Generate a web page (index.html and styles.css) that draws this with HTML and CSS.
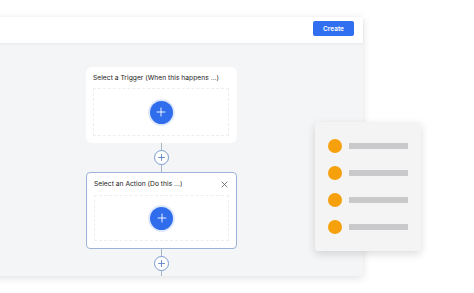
FILE: index.html
```html
<!DOCTYPE html>
<html lang="en">
<head>
    <meta charset="UTF-8">
    <meta name="viewport" content="width=device-width, initial-scale=1.0">
    <title>Workflow Builder</title>
    <link rel="stylesheet" href="styles.css">
</head>
<body>
    <div class="window">
        <div class="window-header">
            <button class="create-btn">Create</button>
        </div>
        <div class="window-body">
            <div class="flow">
                <div class="card">
                    <div class="card-title">Select a Trigger (When this happens ...)</div>
                    <div class="drop-zone">
                        <span class="add-big">
                            <svg viewBox="0 0 24 24" width="12" height="12"><path d="M12 4v16M4 12h16" stroke="#fff" stroke-width="1.8" fill="none" stroke-linecap="round"/></svg>
                        </span>
                    </div>
                </div>

                <div class="connector">
                    <span class="add-small">
                        <svg viewBox="0 0 16 16" width="9" height="9"><path d="M8 2v12M2 8h12" stroke="#5b82c9" stroke-width="1.6" fill="none"/></svg>
                    </span>
                </div>

                <div class="card card-active">
                    <div class="card-title">
                        Select an Action (Do this ...)
                        <svg class="close" viewBox="0 0 10 10" width="7" height="7"><path d="M1 1l8 8M9 1l-8 8" stroke="#555" stroke-width="1.1" fill="none"/></svg>
                    </div>
                    <div class="drop-zone drop-zone-short">
                        <span class="add-big">
                            <svg viewBox="0 0 24 24" width="12" height="12"><path d="M12 4v16M4 12h16" stroke="#fff" stroke-width="1.8" fill="none" stroke-linecap="round"/></svg>
                        </span>
                    </div>
                </div>

                <div class="connector connector-end">
                    <span class="add-small">
                        <svg viewBox="0 0 16 16" width="9" height="9"><path d="M8 2v12M2 8h12" stroke="#5b82c9" stroke-width="1.6" fill="none"/></svg>
                    </span>
                </div>
            </div>
        </div>
    </div>

    <!-- Floating list panel -->
    <div class="list-panel">
        <div class="list-row"><span class="dot"></span><span class="bar"></span></div>
        <div class="list-row"><span class="dot"></span><span class="bar"></span></div>
        <div class="list-row"><span class="dot"></span><span class="bar"></span></div>
        <div class="list-row"><span class="dot"></span><span class="bar"></span></div>
    </div>
</body>
</html>
```

FILE: styles.css
```css
* {
    margin: 0;
    padding: 0;
    box-sizing: border-box;
}

html, body {
    width: 100%;
    height: 100%;
    overflow: hidden;
}

body {
    background-color: #ffffff;
    font-family: 'Inter', 'Helvetica', sans-serif;
    color: #333;
    padding-top: 17px;
}

.window {
    width: 383px;
    margin-left: -20px;
    background-color: #f4f5f7;
    box-shadow: 0 2px 8px rgba(0, 0, 0, 0.12);
}

.window-header {
    height: 26px;
    background-color: #ffffff;
    display: flex;
    justify-content: flex-end;
    align-items: flex-start;
    padding: 4px 9px 0 0;
    box-shadow: 0 1px 3px rgba(0, 0, 0, 0.06);
    position: relative;
}

.create-btn {
    background-color: #2f6ff0;
    color: #fff;
    border: none;
    border-radius: 2px;
    width: 41px;
    height: 15px;
    font-family: 'Inter', sans-serif;
    font-size: 6.5px;
    font-weight: 600;
}

.window-body {
    height: 233px;
    padding: 24px 0 0 106px;
    overflow: hidden;
}

.flow {
    width: 151px;
    display: flex;
    flex-direction: column;
    align-items: stretch;
}

.card {
    background-color: #ffffff;
    border-radius: 6px;
    padding: 0 8px 7px 7px;
    height: 76px;
}

.card-active {
    border: 1px solid #9db2d6;
    border-radius: 4px;
    height: 77px;
    padding: 0 7px 7px 7px;
}

.card-title {
    height: 21px;
    display: flex;
    align-items: center;
    justify-content: space-between;
    font-size: 6.7px;
    color: #222;
    letter-spacing: 0.02px;
}

.card-active .card-title {
    height: 22px;
    padding-right: 1px;
}

.drop-zone {
    height: 48px;
    border: 1px dashed #eceef1;
    display: flex;
    justify-content: center;
    align-items: center;
}

.drop-zone-short {
    height: 46px;
}

.add-big {
    width: 23px;
    height: 23px;
    border-radius: 50%;
    background-color: #2f6ded;
    box-shadow: 0 0 0 2px rgba(47, 109, 237, 0.15);
    display: flex;
    justify-content: center;
    align-items: center;
}

.connector {
    height: 29px;
    display: flex;
    justify-content: center;
    align-items: center;
    background: linear-gradient(#a8b4c8, #a8b4c8) no-repeat center / 1px 100%;
}

.connector-end {
    height: 30px;
    align-items: flex-start;
    padding-top: 7px;
}

.add-small {
    width: 15px;
    height: 15px;
    border-radius: 50%;
    border: 1px solid #7c9bd2;
    background-color: #fff;
    display: flex;
    justify-content: center;
    align-items: center;
}

/* Floating list panel */
.list-panel {
    position: absolute;
    left: 315px;
    top: 122px;
    width: 106px;
    height: 129px;
    background-color: #f4f4f5;
    border-radius: 3px;
    box-shadow: 0 3px 8px rgba(0, 0, 0, 0.14);
    padding: 17px 0 0 13px;
    display: flex;
    flex-direction: column;
    gap: 13px;
}

.list-row {
    display: flex;
    align-items: center;
    gap: 7px;
    height: 14px;
}

.dot {
    width: 14px;
    height: 14px;
    border-radius: 50%;
    background-color: #f6a00c;
}

.bar {
    width: 59px;
    height: 6px;
    background-color: #c9c9cb;
}
```
